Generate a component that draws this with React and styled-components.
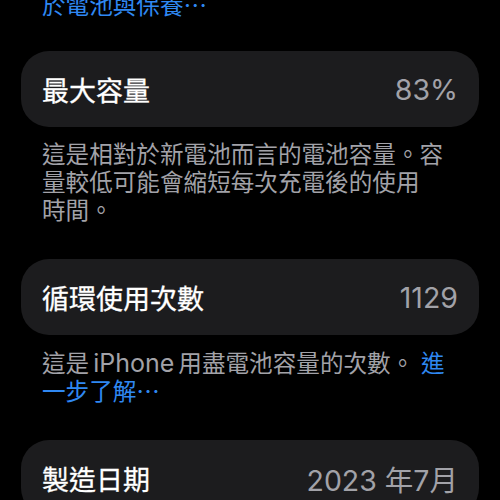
import styled, { createGlobalStyle } from 'styled-components';

const GlobalStyle = createGlobalStyle`
  html, body {
    margin: 0;
    padding: 0;
    background: #000;
  }
  body {
    font-family: "Inter", "Noto Sans CJK TC", sans-serif;
    -webkit-font-smoothing: antialiased;
  }
`;

const colors = {
  background: '#000000',
  card: '#1c1c1e',
  label: '#ffffff',
  secondary: '#a2a2a8',
  link: '#2f88f2',
};

const Page = styled.div`
  background-color: ${colors.background};
  width: 500px;
  height: 500px;
  overflow: hidden;
  padding: 0 21px;
  box-sizing: border-box;
  display: flex;
  flex-direction: column;
`;

const Card = styled.div`
  background-color: ${colors.card};
  border-radius: 28px;
  height: 76px;
  padding: 0 21px;
  margin-top: ${(p) => (p.$tight ? '31px' : '34px')};
  flex-shrink: 0;
  display: flex;
  align-items: center;
  justify-content: space-between;
`;

// medium weight is not installed for the CJK face, thicken regular a bit
const Label = styled.span`
  color: ${colors.label};
  font-size: 27px;
  font-weight: 400;
  -webkit-text-stroke: 0.3px ${colors.label};
`;

const Value = styled.span`
  color: ${colors.secondary};
  font-size: 28.5px;
  font-weight: 400;
`;

const Footnote = styled.p`
  margin: ${(p) => (p.$first ? '-8px' : '14px')} 0 0;
  padding: 0 21px;
  color: ${colors.secondary};
  font-size: 23.6px;
  line-height: 28px;
  font-weight: 400;
`;

const Link = styled.span`
  color: ${colors.link};
`;

const Latin = styled.span`
  font-size: 25px;
  line-height: 28px;
  margin: 0 4px;
`;

const Keep = styled.span`
  white-space: nowrap;
`;

function Row({ label, value, tight }) {
  return (
    <Card $tight={tight}>
      <Label>{label}</Label>
      <Value>{value}</Value>
    </Card>
  );
}

function App() {
  return (
    <>
      <GlobalStyle />
      <Page>
        <Footnote $first>
          <Link>於電池與保養⋯</Link>
        </Footnote>
        <Row label="最大容量" value="83%" tight />
        <Footnote>
          這是相對於新電池而言的電池容量。容量較低可能會縮短每次充電後的使用<Keep>時間。</Keep>
        </Footnote>
        <Row label="循環使用次數" value="1129" />
        <Footnote>
          這是<Latin>iPhone</Latin>用盡電池容量的次數。 <Link>進一步了解⋯</Link>
        </Footnote>
        <Row label="製造日期" value="2023 年7月" />
      </Page>
    </>
  );
}

export default App;
